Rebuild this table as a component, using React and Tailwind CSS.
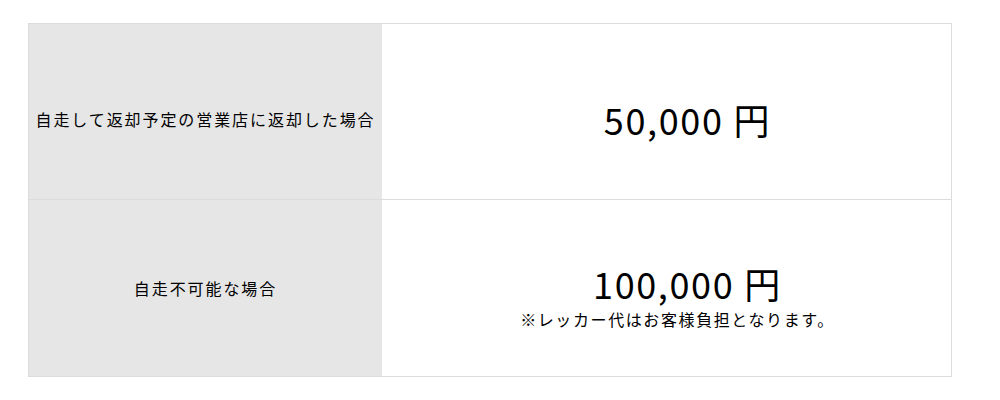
export default function App() {
  const font = { fontFamily: '"Noto Sans CJK JP", "Noto Sans", sans-serif' };
  return (
    <div className="w-[1000px] h-[400px] bg-white pt-[23px] pl-[28px]" style={font}>
      <div className="w-[924px] border border-[#dcdcdc] text-black">
        <div className="flex h-[176px] border-b border-[#dcdcdc]">
          <div className="w-[353px] shrink-0 bg-[#e6e6e6] flex items-center justify-center pt-[14px] text-[16px] tracking-[0.12em]">
            自走して返却予定の営業店に返却した場合
          </div>
          <div className="flex-1 flex items-center justify-center pt-[14px] pl-[42px] text-[36px] tracking-[0.045em]">
            <span>50,000</span>
            <span className="ml-[10px]">円</span>
          </div>
        </div>
        <div className="flex h-[176px]">
          <div className="w-[353px] shrink-0 bg-[#e6e6e6] flex items-center justify-center text-[16px] tracking-[0.12em]">
            自走不可能な場合
          </div>
          <div className="flex-1 flex flex-col items-center justify-center pt-[14px] pl-[22px]">
            <div className="flex text-[36px] leading-[1.35] tracking-[0.045em] pl-[20px]">
              <span>100,000</span>
              <span className="ml-[10px]">円</span>
            </div>
            <div className="text-[16px] tracking-[0.1em] leading-[1.5]">※レッカー代はお客様負担となります。</div>
          </div>
        </div>
      </div>
    </div>
  );
}
